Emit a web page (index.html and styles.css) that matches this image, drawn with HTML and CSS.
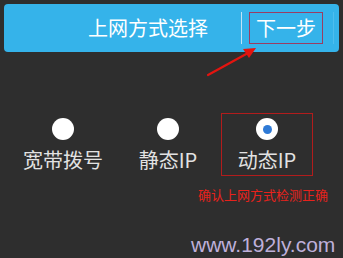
FILE: index.html
```html
<!DOCTYPE html>
<html lang="zh">
<head>
<meta charset="utf-8">
<link rel="stylesheet" href="styles.css">
</head>
<body>
<div class="screen">
  <div class="topbar">
    <div class="title">上网方式选择</div>
    <div class="sep"></div>
    <div class="next">下一步</div>
    <div class="faint"></div>
  </div>
  <svg class="arrow" width="343" height="258" viewBox="0 0 343 258">
    <line x1="208" y1="75" x2="248" y2="53" stroke="#e3140f" stroke-width="2.2" stroke-linecap="round"/>
    <polygon points="256,48 243,49 249,58" fill="#e3140f"/>
  </svg>
  <div class="options">
    <div class="opt">
      <span class="radio"></span>
      <span class="label">宽带拨号</span>
    </div>
    <div class="opt">
      <span class="radio"></span>
      <span class="label">静态IP</span>
    </div>
    <div class="opt opt-marked">
      <span class="radio radio-on"></span>
      <span class="label">动态IP</span>
    </div>
  </div>
  <div class="note">确认上网方式检测正确</div>
  <div class="mark">www.192ly.com</div>
</div>
</body>
</html>
```
FILE: styles.css
```css
html, body {
  margin: 0;
  padding: 0;
  background: #2e2e2e;
}
.screen {
  position: relative;
  width: 343px;
  height: 258px;
  box-sizing: border-box;
  padding: 4px 4px 0 4px;
  background: #2e2e2e;
  font-family: "Noto Sans CJK SC", "Noto Sans", sans-serif;
  overflow: hidden;
}
.topbar {
  height: 48px;
  width: 335px;
  background: #35b3ea;
  border-radius: 4px;
  display: flex;
  align-items: center;
  color: #ffffff;
  font-size: 20px;
}
.title {
  padding-left: 84px;
  width: 153px;
  line-height: 24px;
}
.sep {
  width: 1px;
  height: 32px;
  background: #bfe3f7;
}
.next {
  margin-left: 7px;
  width: 72px;
  height: 30px;
  border: 1px solid #9a3d62;
  box-sizing: content-box;
  display: flex;
  align-items: center;
  justify-content: center;
  line-height: 24px;
}
.faint {
  margin-left: 10px;
  width: 1px;
  height: 32px;
  background: #4ebdee;
}
.arrow {
  position: absolute;
  left: 0;
  top: 0;
  pointer-events: none;
}
.options {
  display: grid;
  grid-template-columns: 104px 98px 92px;
  column-gap: 4px;
  padding-left: 7px;
  margin-top: 61px;
}
.opt {
  display: flex;
  flex-direction: column;
  align-items: center;
  height: 63px;
  box-sizing: border-box;
  padding-top: 5px;
}
.opt-marked {
  border: 1px solid #b21c1c;
}
.radio {
  width: 22px;
  height: 22px;
  border-radius: 50%;
  background: #ffffff;
  display: flex;
  align-items: center;
  justify-content: center;
}
.radio-on::after {
  content: "";
  width: 9px;
  height: 9px;
  border-radius: 50%;
  background: #2e7ad6;
}
.label {
  margin-top: 6px;
  font-size: 20px;
  line-height: 28px;
  color: #e2e2e2;
}
.opt-marked .radio {
  margin-top: -1px;
}
.note {
  margin-top: 10px;
  padding-left: 194px;
  font-size: 13px;
  line-height: 18px;
  color: #e8221c;
  letter-spacing: 0;
}
.mark {
  margin-top: 29px;
  padding-left: 187px;
  font-family: "Liberation Sans", Arial, sans-serif;
  font-size: 21px;
  line-height: 24px;
  color: #bfb0da;
}
```
